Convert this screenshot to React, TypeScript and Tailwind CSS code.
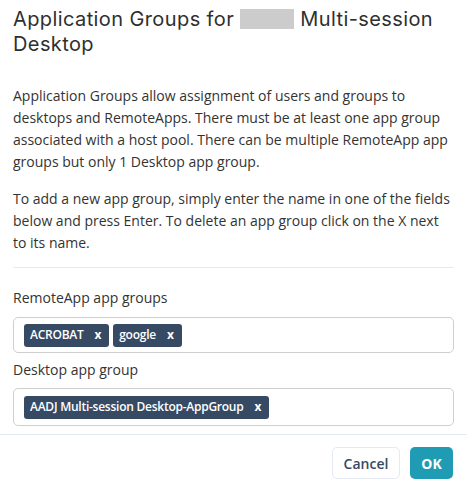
import React from "react";

const Tag = ({ label }: { label: string }) => (
  <span className="inline-flex h-[23px] items-center rounded-[3px] bg-[#364a63] pl-[6px] pr-[8px] text-[12px] font-semibold tracking-[-0.25px] text-white">
    <span>{label}</span>
    <span className="ml-[11px] text-[12px] font-bold leading-none">x</span>
  </span>
);

export default function App() {
  return (
    <div
      className="h-[488px] w-[467px] bg-white text-[#333]"
      style={{ fontFamily: '"Open Sans", sans-serif' }}
    >
      <div className="px-[13px] pt-[6px]">
        <h2
          className="text-[20px] font-normal leading-[25px] tracking-[0.4px] text-[#2f2f2f]"
          style={{ fontFamily: 'Inter, "Open Sans", sans-serif' }}
        >
          Application Groups for{" "}
          <span className="inline-block h-[20px] w-[54px] translate-y-[3px] bg-[#cccccc] align-baseline" />{" "}
          Multi-session Desktop
        </h2>
        <div className="mt-[28px] text-[14px] leading-[22px]">
          <p className="mb-[15px]">
            Application Groups allow assignment of users and groups to desktops and RemoteApps. There must be at
            least one app group associated with a host pool. There can be multiple RemoteApp app groups but only 1
            Desktop app group.
          </p>
          <p>
            To add a new app group, simply enter the name in one of the fields below and press Enter. To delete an
            app group click on the X next to its name.
          </p>
        </div>
        <div className="mt-[13px] h-px bg-[#e5e9f2]" />
        <div className="mt-[19px] text-[14px] leading-[22px]">RemoteApp app groups</div>
        <div className="mt-[8px] flex h-[36px] items-center gap-[4px] rounded-[5px] border border-[#cfcfcf] px-[10px]">
          <Tag label="ACROBAT" />
          <Tag label="google" />
        </div>
        <div className="mt-[6px] text-[14px] leading-[22px]">Desktop app group</div>
        <div className="mt-[7px] flex h-[38px] items-center gap-[4px] rounded-[5px] border border-[#cfcfcf] px-[10px]">
          <Tag label="AADJ Multi-session Desktop-AppGroup" />
        </div>
      </div>
      <div className="mt-[8px] h-px w-full bg-[#e5e9f2]" />
      <div className="flex justify-end gap-[10px] px-[14px] pt-[12px]">
        <button className="h-[32px] w-[68px] rounded-[5px] border border-[#e5e9f2] bg-white text-[14px] font-semibold text-[#364a63]">
          Cancel
        </button>
        <button className="h-[32px] w-[43px] rounded-[5px] bg-[#1f9bb4] text-[14px] font-bold text-white">
          OK
        </button>
      </div>
    </div>
  );
}
